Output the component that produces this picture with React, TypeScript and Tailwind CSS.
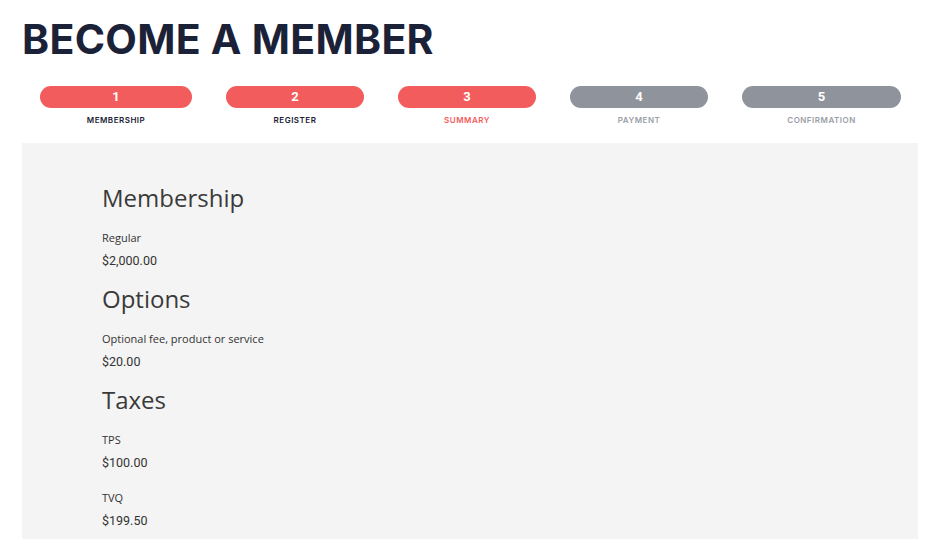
const steps = [
  { n: 1, label: 'MEMBERSHIP', w: 'w-[186px]', state: 'done' },
  { n: 2, label: 'REGISTER', w: 'w-[172px]', state: 'done' },
  { n: 3, label: 'SUMMARY', w: 'w-[172px]', state: 'current' },
  { n: 4, label: 'PAYMENT', w: 'w-[172px]', state: 'todo' },
  { n: 5, label: 'CONFIRMATION', w: 'w-[193px]', state: 'todo' },
];

const sections = [
  { title: 'Membership', items: [{ label: 'Regular', price: '$2,000.00' }] },
  { title: 'Options', items: [{ label: 'Optional fee, product or service', price: '$20.00' }] },
  {
    title: 'Taxes',
    items: [
      { label: 'TPS', price: '$100.00' },
      { label: 'TVQ', price: '$199.50' },
    ],
  },
];

export default function App() {
  return (
    <div className="min-h-screen bg-white px-[22px] pt-[14px]">
      <h1 className="font-['Inter',sans-serif] text-[41px] font-bold leading-[50px] text-[#1b2238] tracking-[0.3px]">
        BECOME A MEMBER
      </h1>

      {/* Steps */}
      <div className="mt-[22px] flex w-[896px] pl-px">
        {steps.map((s) => (
          <div key={s.n} className={`${s.w} flex flex-col items-center px-[17px]`}>
            <div
              className={`flex h-[22px] w-full items-center justify-center rounded-full font-['Roboto',sans-serif] text-[13px] font-bold text-white ${
                s.state === 'todo' ? 'bg-[#8f939b]' : 'bg-[#f25c5c]'
              }`}
            >
              {s.n}
            </div>
            <div
              className={`mt-[6px] font-['Inter',sans-serif] text-[8px] font-semibold tracking-[0.5px] ${
                s.state === 'done'
                  ? 'text-[#1b2238]'
                  : s.state === 'current'
                  ? 'text-[#f25c5c]'
                  : 'text-[#9a9ea6]'
              }`}
            >
              {s.label}
            </div>
          </div>
        ))}
      </div>

      {/* Summary panel */}
      <div className="mt-[17px] flex w-[896px] flex-col gap-[13px] bg-[#f4f4f4] px-[80px] pb-[20px] pt-[38px] font-['Open_Sans',sans-serif]">
        {sections.map((sec) => (
          <div key={sec.title}>
            <h2 className="text-[24px] leading-[34px] text-[#3a3a3a]">{sec.title}</h2>
            <div className="mt-[15px] flex flex-col gap-[19px]">
              {sec.items.map((it) => (
                <div key={it.label}>
                  <div className="text-[11px] leading-[16px] text-[#333]">{it.label}</div>
                  <div className="mt-[7px] font-['Roboto',sans-serif] text-[12.5px] leading-[16px] text-[#333]">
                    {it.price}
                  </div>
                </div>
              ))}
            </div>
          </div>
        ))}
      </div>
    </div>
  );
}
